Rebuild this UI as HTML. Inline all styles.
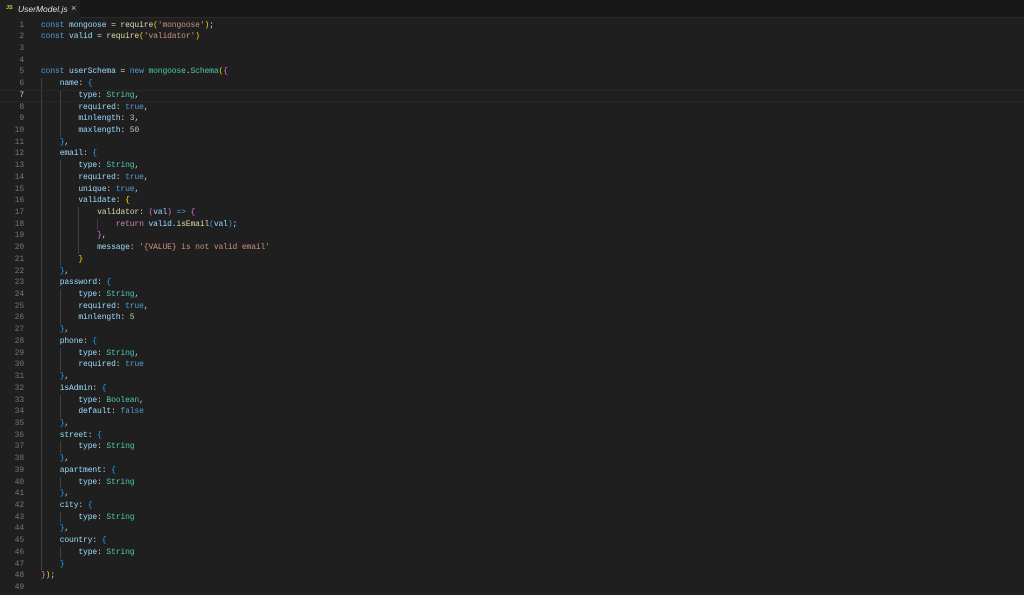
<!DOCTYPE html>
<html><head><meta charset="utf-8"><style>
html,body{margin:0;padding:0;background:#1f1f1f;width:1024px;height:595px;overflow:hidden}
.bar{position:absolute;left:0;top:0;width:1024px;height:17px;background:#181818;border-bottom:1px solid #2b2b2b}
.tab{position:absolute;left:0;top:0;width:80px;height:18px;background:#1f1f1f;font:italic 8.5px "Liberation Sans",sans-serif;color:#e0e0e0}
.tab .js{position:absolute;left:6px;top:5px;font:bold 5.5px "Liberation Sans",sans-serif;color:#cbcb41;font-style:normal}
.tab .n{position:absolute;left:18px;top:4px}
.tab .x{position:absolute;left:71px;top:3px;font-style:normal;font-size:9px;color:#ccc}
.ed{position:absolute;left:0;top:19.5px;width:1024px}
.l{position:relative;height:11.73px;line-height:11.73px;font:8px/11.73px "Liberation Mono",monospace;letter-spacing:-0.13px;white-space:pre;color:#d4d4d4}
.ln{position:absolute;left:0;width:24px;text-align:right;color:#6e7681}
.c{position:absolute;left:41px}
.act{border-top:1px solid #282828;border-bottom:1px solid #282828;box-sizing:border-box;line-height:9.73px}
.act .ln{color:#ccc}
.g{position:absolute;top:0;height:11.73px;width:1px;background:#404040}
.k{color:#569cd6}.v{color:#9cdcfe}.f{color:#dcdcaa}.s{color:#ce9178}.t{color:#4ec9b0}.n2{color:#b5cea8}.r{color:#c586c0}
.b1{color:#ffd700}.b2{color:#da70d6}.b3{color:#179fff}
</style></head><body>
<div class="bar"></div>
<div class="tab"><span class="js">JS</span><span class="n">UserModel.js</span><span class="x">×</span></div>
<div class="ed">
<div class="l"><span class="ln">1</span><span class="c"><span class="k">const</span> <span class="v">mongoose</span> = <span class="f">require</span><span class="b1">(</span><span class="s">'mongoose'</span><span class="b1">)</span>;</span></div>
<div class="l"><span class="ln">2</span><span class="c"><span class="k">const</span> <span class="v">valid</span> = <span class="f">require</span><span class="b1">(</span><span class="s">'validator'</span><span class="b1">)</span></span></div>
<div class="l"><span class="ln">3</span></div>
<div class="l"><span class="ln">4</span></div>
<div class="l"><span class="ln">5</span><span class="c"><span class="k">const</span> <span class="v">userSchema</span> = <span class="k">new</span> <span class="t">mongoose</span>.<span class="t">Schema</span><span class="b1">(</span><span class="b2">{</span></span></div>
<div class="l"><span class="ln">6</span><span class="g" style="left:41px"></span><span class="c">    <span class="v">name</span>: <span class="b3">{</span></span></div>
<div class="l act"><span class="ln">7</span><span class="g" style="left:41px"></span><span class="g" style="left:60px"></span><span class="c">        <span class="v">type</span>: <span class="t">String</span>,</span></div>
<div class="l"><span class="ln">8</span><span class="g" style="left:41px"></span><span class="g" style="left:60px"></span><span class="c">        <span class="v">required</span>: <span class="k">true</span>,</span></div>
<div class="l"><span class="ln">9</span><span class="g" style="left:41px"></span><span class="g" style="left:60px"></span><span class="c">        <span class="v">minlength</span>: <span class="n2">3</span>,</span></div>
<div class="l"><span class="ln">10</span><span class="g" style="left:41px"></span><span class="g" style="left:60px"></span><span class="c">        <span class="v">maxlength</span>: <span class="n2">50</span></span></div>
<div class="l"><span class="ln">11</span><span class="g" style="left:41px"></span><span class="c">    <span class="b3">}</span>,</span></div>
<div class="l"><span class="ln">12</span><span class="g" style="left:41px"></span><span class="c">    <span class="v">email</span>: <span class="b3">{</span></span></div>
<div class="l"><span class="ln">13</span><span class="g" style="left:41px"></span><span class="g" style="left:60px"></span><span class="c">        <span class="v">type</span>: <span class="t">String</span>,</span></div>
<div class="l"><span class="ln">14</span><span class="g" style="left:41px"></span><span class="g" style="left:60px"></span><span class="c">        <span class="v">required</span>: <span class="k">true</span>,</span></div>
<div class="l"><span class="ln">15</span><span class="g" style="left:41px"></span><span class="g" style="left:60px"></span><span class="c">        <span class="v">unique</span>: <span class="k">true</span>,</span></div>
<div class="l"><span class="ln">16</span><span class="g" style="left:41px"></span><span class="g" style="left:60px"></span><span class="c">        <span class="v">validate</span>: <span class="b1">{</span></span></div>
<div class="l"><span class="ln">17</span><span class="g" style="left:41px"></span><span class="g" style="left:60px"></span><span class="g" style="left:78px"></span><span class="c">            <span class="f">validator</span>: <span class="b2">(</span><span class="v">val</span><span class="b2">)</span> <span class="k">=&gt;</span> <span class="b2">{</span></span></div>
<div class="l"><span class="ln">18</span><span class="g" style="left:41px"></span><span class="g" style="left:60px"></span><span class="g" style="left:78px"></span><span class="g" style="left:97px"></span><span class="c">                <span class="r">return</span> <span class="v">valid</span>.<span class="f">isEmail</span><span class="b3">(</span><span class="v">val</span><span class="b3">)</span>;</span></div>
<div class="l"><span class="ln">19</span><span class="g" style="left:41px"></span><span class="g" style="left:60px"></span><span class="g" style="left:78px"></span><span class="c">            <span class="b2">}</span>,</span></div>
<div class="l"><span class="ln">20</span><span class="g" style="left:41px"></span><span class="g" style="left:60px"></span><span class="g" style="left:78px"></span><span class="c">            <span class="v">message</span>: <span class="s">'{VALUE} is not valid email'</span></span></div>
<div class="l"><span class="ln">21</span><span class="g" style="left:41px"></span><span class="g" style="left:60px"></span><span class="c">        <span class="b1">}</span></span></div>
<div class="l"><span class="ln">22</span><span class="g" style="left:41px"></span><span class="c">    <span class="b3">}</span>,</span></div>
<div class="l"><span class="ln">23</span><span class="g" style="left:41px"></span><span class="c">    <span class="v">password</span>: <span class="b3">{</span></span></div>
<div class="l"><span class="ln">24</span><span class="g" style="left:41px"></span><span class="g" style="left:60px"></span><span class="c">        <span class="v">type</span>: <span class="t">String</span>,</span></div>
<div class="l"><span class="ln">25</span><span class="g" style="left:41px"></span><span class="g" style="left:60px"></span><span class="c">        <span class="v">required</span>: <span class="k">true</span>,</span></div>
<div class="l"><span class="ln">26</span><span class="g" style="left:41px"></span><span class="g" style="left:60px"></span><span class="c">        <span class="v">minlength</span>: <span class="n2">5</span></span></div>
<div class="l"><span class="ln">27</span><span class="g" style="left:41px"></span><span class="c">    <span class="b3">}</span>,</span></div>
<div class="l"><span class="ln">28</span><span class="g" style="left:41px"></span><span class="c">    <span class="v">phone</span>: <span class="b3">{</span></span></div>
<div class="l"><span class="ln">29</span><span class="g" style="left:41px"></span><span class="g" style="left:60px"></span><span class="c">        <span class="v">type</span>: <span class="t">String</span>,</span></div>
<div class="l"><span class="ln">30</span><span class="g" style="left:41px"></span><span class="g" style="left:60px"></span><span class="c">        <span class="v">required</span>: <span class="k">true</span></span></div>
<div class="l"><span class="ln">31</span><span class="g" style="left:41px"></span><span class="c">    <span class="b3">}</span>,</span></div>
<div class="l"><span class="ln">32</span><span class="g" style="left:41px"></span><span class="c">    <span class="v">isAdmin</span>: <span class="b3">{</span></span></div>
<div class="l"><span class="ln">33</span><span class="g" style="left:41px"></span><span class="g" style="left:60px"></span><span class="c">        <span class="v">type</span>: <span class="t">Boolean</span>,</span></div>
<div class="l"><span class="ln">34</span><span class="g" style="left:41px"></span><span class="g" style="left:60px"></span><span class="c">        <span class="v">default</span>: <span class="k">false</span></span></div>
<div class="l"><span class="ln">35</span><span class="g" style="left:41px"></span><span class="c">    <span class="b3">}</span>,</span></div>
<div class="l"><span class="ln">36</span><span class="g" style="left:41px"></span><span class="c">    <span class="v">street</span>: <span class="b3">{</span></span></div>
<div class="l"><span class="ln">37</span><span class="g" style="left:41px"></span><span class="g" style="left:60px"></span><span class="c">        <span class="v">type</span>: <span class="t">String</span></span></div>
<div class="l"><span class="ln">38</span><span class="g" style="left:41px"></span><span class="c">    <span class="b3">}</span>,</span></div>
<div class="l"><span class="ln">39</span><span class="g" style="left:41px"></span><span class="c">    <span class="v">apartment</span>: <span class="b3">{</span></span></div>
<div class="l"><span class="ln">40</span><span class="g" style="left:41px"></span><span class="g" style="left:60px"></span><span class="c">        <span class="v">type</span>: <span class="t">String</span></span></div>
<div class="l"><span class="ln">41</span><span class="g" style="left:41px"></span><span class="c">    <span class="b3">}</span>,</span></div>
<div class="l"><span class="ln">42</span><span class="g" style="left:41px"></span><span class="c">    <span class="v">city</span>: <span class="b3">{</span></span></div>
<div class="l"><span class="ln">43</span><span class="g" style="left:41px"></span><span class="g" style="left:60px"></span><span class="c">        <span class="v">type</span>: <span class="t">String</span></span></div>
<div class="l"><span class="ln">44</span><span class="g" style="left:41px"></span><span class="c">    <span class="b3">}</span>,</span></div>
<div class="l"><span class="ln">45</span><span class="g" style="left:41px"></span><span class="c">    <span class="v">country</span>: <span class="b3">{</span></span></div>
<div class="l"><span class="ln">46</span><span class="g" style="left:41px"></span><span class="g" style="left:60px"></span><span class="c">        <span class="v">type</span>: <span class="t">String</span></span></div>
<div class="l"><span class="ln">47</span><span class="g" style="left:41px"></span><span class="c">    <span class="b3">}</span></span></div>
<div class="l"><span class="ln">48</span><span class="c"><span class="b2">}</span><span class="b1">)</span>;</span></div>
<div class="l"><span class="ln">49</span></div>
</div>
</body></html>
